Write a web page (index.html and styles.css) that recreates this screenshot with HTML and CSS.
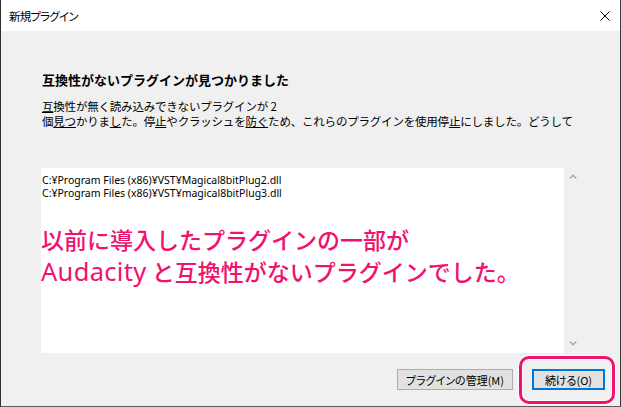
FILE: index.html
```html
<!DOCTYPE html>
<html lang="ja">
<head>
<meta charset="utf-8">
<title>新規プラグイン</title>
<link rel="stylesheet" href="styles.css">
</head>
<body>
<div class="window">
  <div class="titlebar">
    <span class="title">新規プラグイン</span>
    <svg class="close" width="10" height="10" viewBox="0 0 10 10" aria-hidden="true">
      <path d="M0.5 0.5 L9.5 9.5 M9.5 0.5 L0.5 9.5" stroke="#000" stroke-width="1" fill="none"/>
    </svg>
  </div>
  <div class="content">
    <h1 class="heading">互換性がないプラグインが見つかりました</h1>
    <p class="message"><span class="ul">互</span>換性が無く読み込みできないプラグインが 2<br>個<span class="ul">見つ</span>かりま<span class="ul">し</span>た。停<span class="ul">止</span>やクラッシュを<span class="ul">防ぐ</span>ため、これらのプラグインを使用停<span class="ul">止</span>にしました。どうして</p>
    <div class="listwrap">
      <div class="list">
        <div class="paths">
          <div class="path">C:¥Program Files (x86)¥VST¥Magical8bitPlug2.dll</div>
          <div class="path">C:¥Program Files (x86)¥VST¥magical8bitPlug3.dll</div>
        </div>
        <p class="note">以前に導入したプラグインの一部が<br><span class="latin">Audacity</span> と互換性がないプラグインでした。</p>
      </div>
      <div class="scrollbar">
        <svg class="arrow" width="8" height="5" viewBox="0 0 8 5" aria-hidden="true"><path d="M0.7 4.5 L4 1.2 L7.3 4.5" stroke="#a6a6a6" stroke-width="1.4" fill="none"/></svg>
        <svg class="arrow" width="8" height="5" viewBox="0 0 8 5" aria-hidden="true"><path d="M0.7 0.5 L4 3.8 L7.3 0.5" stroke="#a6a6a6" stroke-width="1.4" fill="none"/></svg>
      </div>
    </div>
    <div class="buttons">
      <button class="btn manage">プラグインの管理(M)</button>
      <div class="focus-wrap">
        <button class="btn primary">続ける(O)</button>
        <span class="highlight"></span>
      </div>
    </div>
  </div>
</div>
</body>
</html>
```

FILE: styles.css
```css
html, body {
  margin: 0;
  padding: 0;
  background: #ffffff;
}

.window {
  width: 621px;
  height: 407px;
  box-sizing: border-box;
  border-left: 1px solid #2d2d33;
  border-right: 1px solid #3a3a3a;
  border-bottom: 1px solid #5a5a5a;
  display: flex;
  flex-direction: column;
  font-family: "Noto Sans CJK JP", "Noto Sans", sans-serif;
  color: #000;
}

.titlebar {
  height: 31px;
  flex: 0 0 31px;
  background: #ffffff;
  display: flex;
  align-items: center;
  justify-content: space-between;
  padding: 0 10px 0 8px;
}

.title {
  font-size: 11.5px;
  letter-spacing: -0.8px;
  font-feature-settings: "palt";
  line-height: 16px;
}

.close {
  display: block;
}

.content {
  flex: 1;
  background: #f0f0f0;
  padding: 0 15px 0 40px;
  display: flex;
  flex-direction: column;
}

.heading {
  margin: 40px 0 0 1px;
  font-size: 13px;
  line-height: 17px;
  font-weight: 700;
}

.message {
  margin: 11px 0 0 1px;
  font-size: 11.5px;
  line-height: 15px;
  letter-spacing: -0.2px;
  white-space: nowrap;
}

.ul {
  text-decoration: underline;
  text-decoration-thickness: 1px;
  text-underline-offset: 1px;
}

.listwrap {
  margin-top: 39px;
  display: flex;
  height: 185px;
}

.list {
  width: 523px;
  background: #ffffff;
  padding: 6px 0 0 1px;
  box-sizing: border-box;
}

.paths {
  font-family: "Noto Sans", "Open Sans", sans-serif;
  font-size: 10.5px;
  line-height: 13px;
}

.note {
  margin: 23px 0 0 -1px;
  font-size: 23px;
  line-height: 32px;
  font-weight: 500;
  color: #f0126f;
  white-space: nowrap;
  text-shadow: 0 0 1px #fff, 0 0 2px #fff;
}

.latin {
  font-family: "Noto Sans", "Noto Sans CJK JP", sans-serif;
  font-size: 25.5px;
  letter-spacing: 0.3px;
  line-height: 20px;
  font-weight: 400;
}

.scrollbar {
  width: 17px;
  display: flex;
  flex-direction: column;
  justify-content: space-between;
  align-items: center;
  padding: 6px 0 7px;
  box-sizing: border-box;
}

.arrow {
  display: block;
}

.buttons {
  margin-top: 16px;
  display: flex;
  justify-content: flex-end;
  gap: 19px;
}

.btn {
  height: 21px;
  box-sizing: border-box;
  background: #e1e1e1;
  border: 1px solid #adadad;
  font-family: "Noto Sans CJK JP", "Noto Sans", sans-serif;
  font-size: 11px;
  font-feature-settings: "palt";
  line-height: 16px;
  color: #000;
  padding: 0;
  margin: 0;
}

.manage {
  width: 116px;
}

.focus-wrap {
  position: relative;
}

.primary {
  width: 73px;
  border: 2px solid #0078d7;
  display: block;
}

.highlight {
  position: absolute;
  left: -13px;
  top: -13px;
  width: 96px;
  height: 48px;
  box-sizing: border-box;
  border: 3px solid #f0126f;
  border-radius: 10px;
  box-shadow: 0 0 0 1px rgba(255, 255, 255, 0.85), inset 0 0 0 1px rgba(255, 255, 255, 0.85);
}
```
